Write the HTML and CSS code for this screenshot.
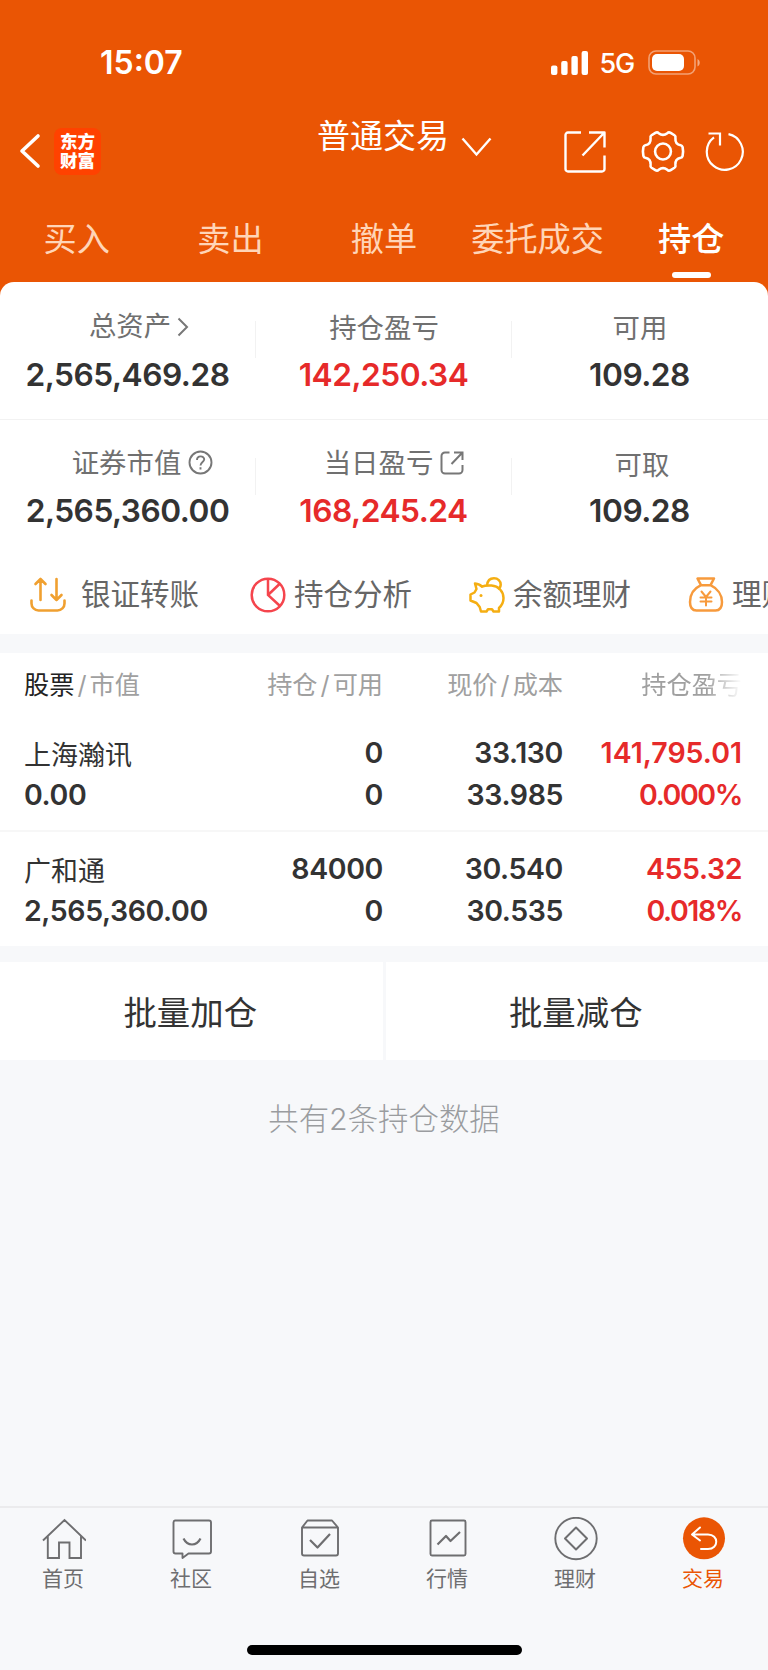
FILE: index.html
```html
<!DOCTYPE html>
<html lang="zh-CN">
<head>
    <meta charset="UTF-8">
    <meta name="viewport" content="width=device-width, initial-scale=1.0">
    <title>普通交易 - 持仓</title>
    <link rel="stylesheet" href="styles.css">
</head>
<body>
    <header class="header">
        <div class="status-bar">
            <span class="time">15:07</span>
            <div class="status-right">
                <svg class="signal" width="38" height="24" viewBox="0 0 38 24" fill="#fff">
                    <rect x="0" y="14.5" width="6.4" height="9.5" rx="2"/>
                    <rect x="10.2" y="10" width="6.4" height="14" rx="2"/>
                    <rect x="20.4" y="5" width="6.4" height="19" rx="2"/>
                    <rect x="30.6" y="0" width="6.4" height="24" rx="2"/>
                </svg>
                <span class="network">5G</span>
                <svg width="53" height="26" viewBox="0 0 53 26">
                    <rect x="1" y="1" width="46" height="23" rx="7" fill="none" stroke="#fff" stroke-opacity=".45" stroke-width="1.6"/>
                    <rect x="4" y="4" width="32" height="17" rx="5" fill="#fff"/>
                    <path d="M49.5 9v7.5c3-1.5 3-6 0-7.5z" fill="#fff" fill-opacity=".5"/>
                </svg>
            </div>
        </div>

        <div class="nav-bar">
            <svg class="back" width="22" height="36" viewBox="0 0 22 36" fill="none" stroke="#fff" stroke-width="3.6" stroke-linecap="round" stroke-linejoin="round"><path d="M19 3L3 18l16 15"/></svg>
            <div class="logo">东方<br>财富</div>
            <div class="title">普通交易</div>
            <svg class="arrow-down" width="31" height="20" viewBox="0 0 31 20" fill="none" stroke="#fff" stroke-width="2.4"><path d="M1.5 1.5l14 16 14-16"/></svg>
            <svg class="icon-share" width="42" height="42" viewBox="0 0 42 42" fill="none" stroke="#fff" stroke-width="2.4" stroke-linejoin="round">
                <path d="M17 1.5H4A2.5 2.5 0 0 0 1.5 4v34A2.5 2.5 0 0 0 4 40.5h34a2.5 2.5 0 0 0 2.5-2.5V24.5"/>
                <path d="M25 1.5h15.5v15M40 2L18.5 24.5"/>
            </svg>
            <svg class="icon-gear" width="44" height="43" viewBox="0 0 46 44" fill="none" stroke="#fff" stroke-width="2.7" stroke-linejoin="round">
                <path d="M15 2.5Q17 1.3 18.5 2.8 Q23 6.5 27.5 2.8 Q29 1.3 31 2.5 L35 5 Q36.5 6 36 8 Q35.5 14.5 41.5 15.5 Q43 15.8 43.5 17.5 L44 22 L43.5 26.5 Q43 28.2 41.5 28.5 Q35.5 29.5 36 36 Q36.5 38 35 39 L31 41.5 Q29 42.7 27.5 41.2 Q23 37.5 18.5 41.2 Q17 42.7 15 41.5 L11 39 Q9.5 38 10 36 Q10.5 29.5 4.5 28.5 Q3 28.2 2.5 26.5 L2 22 L2.5 17.5 Q3 15.8 4.5 15.5 Q10.5 14.5 10 8 Q9.5 6 11 5z"/>
                <circle cx="23" cy="22" r="8.3"/>
            </svg>
            <svg class="icon-refresh" width="40" height="40" viewBox="0 0 40 40" fill="none" stroke="#fff" stroke-width="2.2">
                <path d="M23.5 3.2a18 18 0 1 1-14.5 3.2"/>
                <path d="M3.5 2.5H15v12"/>
            </svg>
        </div>

        <nav class="tabs">
            <a class="tab">买入</a>
            <a class="tab">卖出</a>
            <a class="tab">撤单</a>
            <a class="tab">委托成交</a>
            <a class="tab active">持仓</a>
        </nav>
    </header>

    <section class="assets">
        <div class="asset-row">
            <div class="asset">
                <div class="asset-label up total-label">总资产<svg class="more" width="12" height="20" viewBox="0 0 12 20" fill="none" stroke="#777" stroke-width="2"><path d="M1.5 1.5L10 10l-8.5 8.5"/></svg></div>
                <div class="asset-value">2,565,469.28</div>
            </div>
            <div class="asset">
                <div class="asset-label">持仓盈亏</div>
                <div class="asset-value red">142,250.34</div>
            </div>
            <div class="asset">
                <div class="asset-label">可用</div>
                <div class="asset-value">109.28</div>
            </div>
        </div>
        <div class="asset-row second">
            <div class="asset">
                <div class="asset-label up market-label">证券市值<svg class="help" width="25" height="25" viewBox="0 0 25 25" fill="none" stroke="#777" stroke-width="1.9"><circle cx="12.5" cy="12.5" r="11"/><path d="M9 10c0-5 7.5-4.5 7.2-.5-.2 2.5-3.7 2.5-3.7 6M12.5 17.2v2.200"/></svg></div>
                <div class="asset-value">2,565,360.00</div>
            </div>
            <div class="asset">
                <div class="asset-label up today-label">当日盈亏<svg class="open" width="24" height="24" viewBox="0 0 24 24" fill="none" stroke="#777" stroke-width="2"><path d="M9.5 1.5H5A3.5 3.5 0 0 0 1.5 5v14A3.5 3.5 0 0 0 5 22.5h14a3.5 3.5 0 0 0 3.5-3.5v-5M14 1.5h8.5V9M22 2L11.5 13"/></svg></div>
                <div class="asset-value red">168,245.24</div>
            </div>
            <div class="asset">
                <div class="asset-label shift">可取</div>
                <div class="asset-value">109.28</div>
            </div>
        </div>

        <div class="links">
            <a class="link first">
                <svg width="37" height="36" viewBox="0 0 37 36" fill="none" stroke="#f0a030" stroke-width="2.6" stroke-linecap="round" stroke-linejoin="round">
                    <path d="M1.5 23.5v3a7 7 0 0 0 7 7h19a7 7 0 0 0 7-7v-3M10.5 23V2M5.5 7l5-5 5 5M26.5 2v21M21.5 18l5 5 5-5"/>
                </svg>
                <span>银证转账</span>
            </a>
            <a class="link">
                <svg width="37" height="36" viewBox="0 0 37 36" fill="none" stroke="#f5454d" stroke-width="2.5">
                    <circle cx="18" cy="18" r="16.3"/><path d="M18 1.7V18l12 11M18 18L29.5 7"/>
                </svg>
                <span>持仓分析</span>
            </a>
            <a class="link">
                <svg width="37" height="36" viewBox="0 0 37 36" fill="none" stroke="#f5ae12" stroke-width="2.5" stroke-linejoin="round">
                    <path d="M18 8.5C18.5 3 22 1.3 25 1.3c4 0 6.7 2.8 6.7 6.2 0 2-1 3.700-2.500 4.700"/>
                    <path d="M6 6.5c3 .3 5.500 1.300 7 3.200 3-1.600 6.500-1.200 9.500-1.200 7 .5 12 6 12 12.500 0 4-1.800 7.500-4.500 10v3.500h-5.500l-1.500-2.300h-4l-1.500 2.300H12l-1.300-4.500-3.200-4-6-2.500v-6l4-2 2-3.500z"/>
                    <circle cx="12" cy="18.5" r="1.5" fill="#f5ae12" stroke="none"/>
                </svg>
                <span>余额理财</span>
            </a>
            <a class="link">
                <svg width="37" height="36" viewBox="0 0 37 36" fill="none" stroke="#f79a3c" stroke-width="2.5" stroke-linejoin="round" stroke-linecap="round">
                    <path d="M9.5 1.5H26l-3.5 6.700h-9.500zM13 8.200C6 11.500 2 18 2 25c0 5.500 2 8.500 6.500 8.500h19c4.500 0 6.500-3 6.500-8.500 0-7-4.500-13.500-11.500-16.800"/>
                    <path d="M13.5 14.5l4.500 5.500 4.500-5.500M18 20v8.500M12.500 20.500h11M12.500 24.500h11" stroke-width="2"/>
                </svg>
                <span>理财</span>
            </a>
        </div>
    </section>

    <section class="positions">
        <div class="grid table-head">
            <div><b>股票</b><i>/</i>市值</div>
            <div>持仓<i>/</i>可用</div>
            <div>现价<i>/</i>成本</div>
            <div class="fade">持仓盈亏</div>
        </div>
        <div class="grid stock">
            <div><p class="name">上海瀚讯</p><p>0.00</p></div>
            <div><p>0</p><p>0</p></div>
            <div><p>33.130</p><p>33.985</p></div>
            <div class="red"><p class="long">141,795.01</p><p class="rate">0.000%</p></div>
        </div>
        <div class="grid stock">
            <div><p class="name">广和通</p><p>2,565,360.00</p></div>
            <div><p>84000</p><p>0</p></div>
            <div><p>30.540</p><p>30.535</p></div>
            <div class="red"><p>455.32</p><p class="rate">0.018%</p></div>
        </div>
    </section>

    <div class="batch">
        <button class="batch-btn">批量加仓</button>
        <button class="batch-btn">批量减仓</button>
    </div>

    <p class="total">共有2条持仓数据</p>

    <footer class="tab-bar">
        <a class="bar-item">
            <svg width="44" height="44" viewBox="0 0 44 44" fill="none" stroke="#6e6e70" stroke-width="1.9"><path d="M1 23.5L22.5 3 44 23.5M5.8 19v22H17V25.5h10.500V41H39V19"/></svg>
            <span>首页</span>
        </a>
        <a class="bar-item">
            <svg width="44" height="44" viewBox="0 0 44 44" fill="none" stroke="#6e6e70" stroke-width="1.9" stroke-linejoin="round"><path d="M5 3.5h34a2 2 0 0 1 2 2v29a2 2 0 0 1-2 2H18.5L12.5 41v-4.500h-7a2 2 0 0 1-2-2v-29a2 2 0 0 1 1.500-2z"/><path d="M13.5 21.5c4 8 13 8 17 0" stroke-width="2.2"/></svg>
            <span>社区</span>
        </a>
        <a class="bar-item">
            <svg width="44" height="44" viewBox="0 0 44 44" fill="none" stroke="#6e6e70" stroke-width="1.9" stroke-linejoin="round"><path d="M4 10.5l5.500-7H34l6 7v26a2 2 0 0 1-2 2H6a2 2 0 0 1-2-2zM4 10.5h36"/><path d="M12 23l7.500 7.500L32 17" stroke-width="2.2"/></svg>
            <span>自选</span>
        </a>
        <a class="bar-item">
            <svg width="44" height="44" viewBox="0 0 44 44" fill="none" stroke="#6e6e70" stroke-width="1.9" stroke-linejoin="round"><rect x="4.5" y="3.5" width="35" height="35" rx="1.5"/><path d="M11.5 27.5L20 19l4.500 5 9.500-9" stroke-width="2.2"/></svg>
            <span>行情</span>
        </a>
        <a class="bar-item">
            <svg width="44" height="44" viewBox="0 0 44 44" fill="none" stroke="#6e6e70" stroke-width="1.9" stroke-linejoin="round"><circle cx="22" cy="21.5" r="20.7"/><path d="M22 10.5l11 11-11 11-11-11z" stroke-width="2"/></svg>
            <span>理财</span>
        </a>
        <a class="bar-item on">
            <svg width="44" height="44" viewBox="0 0 44 44" fill="none" stroke="#fff" stroke-width="2" stroke-linecap="round" stroke-linejoin="round"><circle cx="22" cy="21.3" r="21" fill="#ea5504" stroke="none"/><path d="M18 10.5l-8 7 8 6M10.5 17.5H26c11 0 11 14.5 0 14.5h-7"/></svg>
            <span>交易</span>
        </a>
        <div class="home-indicator"></div>
    </footer>
</body>
</html>
```
FILE: styles.css
```css
* {
    box-sizing: border-box;
    margin: 0;
    padding: 0;
}

body {
    width: 768px;
    height: 1670px;
    overflow: hidden;
    display: flex;
    flex-direction: column;
    background: #f7f8fa;
    color: #333;
    font-family: Inter, 'Noto Sans CJK SC', sans-serif;
}

svg {
    display: block;
    flex: none;
}

/* header */
.header {
    height: 300px;
    flex: none;
    background: #ea5504;
    color: #fff;
}

.status-bar {
    height: 100px;
    padding: 25px 67px 0 100px;
    display: flex;
    justify-content: space-between;
    align-items: center;
}

.time {
    font-size: 32px;
    font-weight: 600;
}

.status-right {
    display: flex;
    align-items: center;
}

.network {
    margin: 2px 14px 0 11px;
    font-size: 27px;
    font-weight: 500;
    letter-spacing: -1.2px;
}

.nav-bar {
    height: 102px;
    padding-left: 19px;
    display: flex;
    align-items: center;
}

.logo {
    width: 47px;
    height: 47px;
    margin-left: 13px;
    padding-top: 4px;
    border-radius: 8px;
    background: #ff4200;
    font-size: 17.5px;
    font-weight: 900;
    line-height: 19.5px;
    text-align: center;
}

.title {
    margin: -34px 0 0 216px;
    font-size: 33px;
}

.arrow-down {
    margin: -9px 0 0 12px;
}

.icon-share {
    margin: 1px 0 0 72px;
}

.icon-gear {
    margin-left: 35px;
}

.icon-refresh {
    margin-left: 20px;
}

.tabs {
    display: grid;
    grid-template-columns: repeat(5, 1fr);
}

.tab {
    height: 76px;
    padding-top: 13px;
    display: flex;
    flex-direction: column;
    align-items: center;
    font-size: 33.2px;
    line-height: 49px;
    color: #ffd5b8;
    white-space: nowrap;
}

.tab.active {
    color: #fff;
    font-weight: 500;
}

.tab.active::after {
    content: '';
    width: 39px;
    height: 6px;
    margin-top: 8px;
    border-radius: 3px;
    background: #fff;
}

/* assets */
.assets {
    height: 352px;
    margin-top: -18px;
    flex: none;
    border-radius: 14px 14px 0 0;
    background: #fff;
    overflow: hidden;
}

.asset-row {
    height: 138px;
    padding-top: 25px;
    display: grid;
    grid-template-columns: repeat(3, 1fr);
    border-bottom: 1px solid #f2f2f2;
}

.asset-row.second {
    height: 132px;
    padding-top: 24px;
    border-bottom: none;
}

.asset {
    height: 98px;
    display: flex;
    flex-direction: column;
    align-items: center;
    background: linear-gradient(#f2f2f2, #f2f2f2) right 14px / 1px 37px no-repeat;
}

.asset:last-child {
    background: none;
}

.asset-label {
    height: 42px;
    flex: none;
    display: flex;
    align-items: center;
    font-size: 27.4px;
    line-height: 36px;
    color: #707070;
}

.asset-label.up {
    padding-bottom: 5px;
}

.total-label {
    padding-left: 22px;
}

.market-label {
    padding-left: 29px;
}

.today-label {
    padding-left: 20px;
}

.asset-label.shift {
    padding-left: 4px;
}

.more {
    margin: 2px 0 0 6px;
}

.help,
.open {
    margin-left: 7px;
}

.asset-value {
    font-size: 31.7px;
    line-height: 52px;
    font-weight: 600;
    letter-spacing: -0.5px;
    padding-right: 1px;
}

.second .asset-value {
    margin-top: -1px;
}

.red {
    color: #e62a2a;
}

.links {
    padding-left: 30px;
    display: flex;
}

.link {
    width: 219px;
    height: 86px;
    flex: none;
    display: flex;
    align-items: center;
    gap: 7px;
    font-size: 29.5px;
    line-height: 44px;
    color: #666;
    white-space: nowrap;
}

.link span {
    margin-top: -2px;
}

.link.first {
    width: 220px;
    gap: 14px;
}

/* positions */
.positions {
    margin-top: 19px;
    height: 293px;
    flex: none;
    background: #fff;
}

.grid {
    display: grid;
    grid-template-columns: 210px 149px 180px 179px;
    padding-left: 24px;
    text-align: right;
}

.grid > div:first-child {
    text-align: left;
}

.table-head {
    height: 65px;
    padding-bottom: 5px;
    align-items: center;
    font-size: 25.2px;
    color: #a0a0a0;
}

.table-head b {
    font-weight: 400;
    color: #222;
}

.table-head i {
    margin: 0 3px;
    font-style: normal;
}

.fade {
    -webkit-mask-image: linear-gradient(to right, #000 80%, transparent 100%);
    mask-image: linear-gradient(to right, #000 80%, transparent 100%);
}

.stock {
    height: 114px;
    padding-top: 14px;
    border-bottom: 2px solid #f7f7f7;
    font-size: 28.5px;
    font-weight: 600;
    line-height: 42px;
    letter-spacing: -0.4px;
}

.stock:last-child {
    padding-top: 16px;
    border-bottom: none;
}

.stock .name {
    height: 42px;
    padding-top: 4px;
    font-size: 27px;
    font-weight: 400;
    line-height: 40px;
    letter-spacing: 0;
}

.stock .long {
    letter-spacing: 0;
}

.stock .rate {
    letter-spacing: -1.4px;
}

/* batch buttons */
.batch {
    height: 98px;
    margin-top: 16px;
    flex: none;
    display: grid;
    grid-template-columns: 1fr 1fr;
    gap: 3px;
}

.batch-btn {
    padding: 0 2px 2px 0;
    border: none;
    background: #fff;
    color: #333;
    font-family: inherit;
    font-size: 33.4px;
}

.total {
    margin-top: 35px;
    font-size: 30.4px;
    line-height: 48px;
    font-weight: 300;
    text-align: center;
    color: #9a9c9f;
}

/* bottom bar */
.tab-bar {
    height: 164px;
    margin-top: auto;
    flex: none;
    display: grid;
    grid-template-columns: repeat(6, 1fr);
    grid-template-rows: 137px 10px;
    border-top: 2px solid #ebebed;
}

.bar-item {
    padding-top: 9px;
    display: flex;
    flex-direction: column;
    align-items: center;
    font-size: 21px;
    line-height: 32px;
    color: #6e6e70;
}

.bar-item span {
    margin-top: 2px;
    padding-right: 2px;
}

.bar-item.on {
    color: #ea5504;
}

.home-indicator {
    grid-column: 1 / -1;
    justify-self: center;
    width: 275px;
    border-radius: 5px;
    background: #000;
}
```
